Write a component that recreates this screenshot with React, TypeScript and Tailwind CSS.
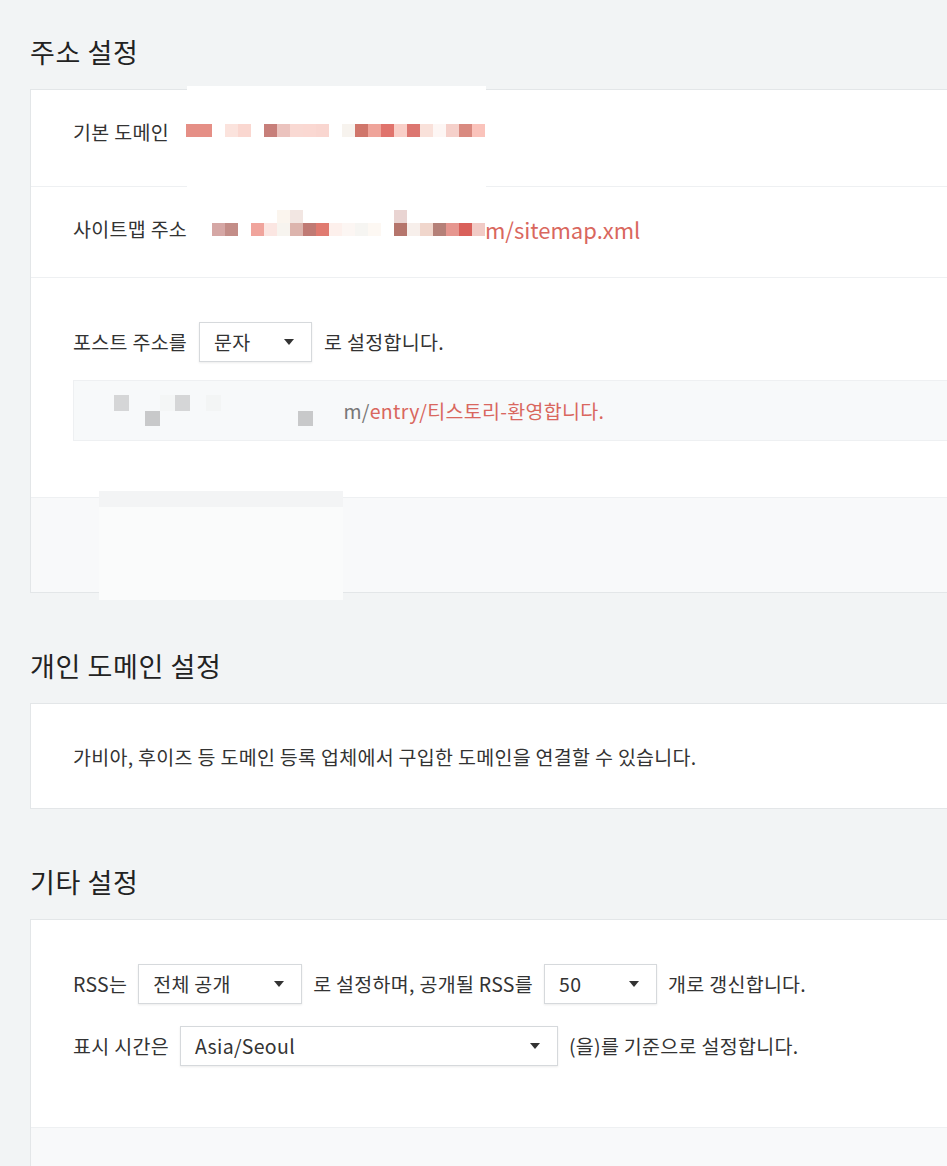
import React from 'react';

// blurred-out domain pixels, 13px cells
const domainCells: string[][] = [
  [
    '#e58f86', '#e58f86', '', '#fbe3dd', '#fad7d0', '', '#c77f7a', '#ebc3be', '#f9d9d3', '#fad8d2', '#f9d6d0', '',
    '#f7f3ee', '#d0766b', '#efa49a', '#e0736c', '#f9cfc8', '#dc7670', '#f9e1da', '#fdf6f4', '#f5d0ca', '#d98a80', '#fac3bb',
  ],
];

const sitemapCells: string[][] = [
  ['', '', '', '', '', '', '', '#fbf5ee', '#f2e6e2', '', '', '', '', '', '', '', '#e9d4d2', '', '', '', '', '', ''],
  [
    '', '', '#d5a7a5', '#c38d88', '', '#f0a49c', '#fbe6e2', '#f7f4ef', '#dcb4ad', '#c07a74', '#e07a70', '#fdf0ec',
    '#fcf6f3', '#f6f5f2', '#fdf8f3', '', '#b5756c', '#f7efeb', '#f0d6cc', '#b58078', '#e6968f', '#d9605a', '#f1cbc6',
  ],
];

const entryCells: string[][] = [
  ['#d5d6d7', '', '', '#f4f6f6', '#d5d6d7', '', '#f3f5f5', '', '', '', '', '', '', '', ''],
  ['', '', '#c8c9ca', '', '', '', '', '', '', '', '', '', '#c8c9ca', '', ''],
];

function Mosaic({ rows, size }: { rows: string[][]; size: string }) {
  return (
    <div className="flex flex-col">
      {rows.map((row, r) => (
        <div key={r} className="flex">
          {row.map((c, i) => (
            <span key={i} style={{ width: size, height: size, background: c || 'transparent' }} />
          ))}
        </div>
      ))}
    </div>
  );
}

function Caret() {
  return (
    <svg width="10" height="6" viewBox="0 0 10 6" className="shrink-0">
      <path d="M0 0h10L5 6z" fill="#333" />
    </svg>
  );
}

function Select({ value, width }: { value: string; width: string }) {
  return (
    <div
      className={`${width} shrink-0 h-[40px] pl-[14px] pr-[17px] flex items-center justify-between bg-white border border-[#d6d9dc] shadow-[0_1px_2px_rgba(0,0,0,0.08)] text-[19.5px] text-[#333]`}
    >
      <span>{value}</span>
      <Caret />
    </div>
  );
}

function Title({ children, className = '' }: { children: React.ReactNode; className?: string }) {
  return (
    <h2 className={`text-[27px] leading-[38px] tracking-[0.6px] text-[#222] mb-[18px] ${className}`}>{children}</h2>
  );
}

export default function App() {
  return (
    <div className="w-[947px] h-[1166px] overflow-hidden bg-[#f2f4f5] font-['Noto_Sans_CJK_KR','Noto_Sans',sans-serif] text-[#333] tracking-[0.3px]">
      <div className="pl-[30px] pt-[33px]">
        {/* 주소 설정 */}
        <Title>주소 설정</Title>
        <div className="relative w-[960px] bg-white border border-[#e3e6e8]">
          <div className="absolute left-[156px] top-[-4px] w-[299px] h-[190px] bg-white" />
          <div className="absolute left-[68px] top-[401px] w-[244px] h-[109px] bg-[#fafbfb]">
            <div className="h-[16px] bg-[#f3f4f5]" />
          </div>

          <div className="border-b border-[#eef0f2] pl-[42px] pt-[26px] pb-[38px]">
            <div className="relative flex items-center h-[32px] text-[19.5px]">
              <span className="w-[113px] shrink-0 whitespace-nowrap">기본 도메인</span>
              <div className="-translate-y-[2px]">
                <Mosaic rows={domainCells} size="13px" />
              </div>
            </div>
          </div>

          <div className="border-b border-[#eef0f2] pl-[42px] pt-[26px] pb-[32px]">
            <div className="relative flex items-center h-[32px] text-[19.5px]">
              <span className="w-[113px] shrink-0 whitespace-nowrap">사이트맵 주소</span>
              <div className="-translate-y-[6px]">
                <Mosaic rows={sitemapCells} size="13px" />
              </div>
              <span className="text-[#d9675e] text-[22px] tracking-normal whitespace-nowrap">m/sitemap.xml</span>
            </div>
          </div>

          <div className="pl-[42px] pt-[44px] pb-[56px]">
            <div className="flex items-center gap-[12px] text-[19.5px] whitespace-nowrap">
              <span>포스트 주소를</span>
              <Select value="문자" width="w-[113px]" />
              <span>로 설정합니다.</span>
            </div>
            <div className="relative mt-[18px] h-[61px] flex items-center pl-[40px] bg-[#f7f9fa] border border-[#eef0f2] text-[19.5px] whitespace-nowrap">
              <Mosaic rows={entryCells} size="15.3px" />
              <span className="text-[#777]">m/</span>
              <span className="text-[#d9675e]">entry/티스토리-환영합니다.</span>
            </div>
          </div>

          <div className="h-[95px] border-t border-[#eef0f2] bg-[#f8f9fa]" />
        </div>

        {/* 개인 도메인 설정 */}
        <Title className="mt-[54px]">개인 도메인 설정</Title>
        <div className="w-[960px] bg-white border border-[#e3e6e8] pl-[42px] pt-[37px] pb-[35px]">
          <p className="text-[19.5px] leading-[32px]">가비아, 후이즈 등 도메인 등록 업체에서 구입한 도메인을 연결할 수 있습니다.</p>
        </div>

        {/* 기타 설정 */}
        <Title className="mt-[54px]">기타 설정</Title>
        <div className="w-[960px] bg-white border border-[#e3e6e8]">
          <div className="pl-[42px] pt-[44px] pb-[61px] flex flex-col gap-[22px] text-[19.5px] whitespace-nowrap">
            <div className="flex items-center gap-[11px]">
              <span>RSS는</span>
              <Select value="전체 공개" width="w-[164px]" />
              <span>로 설정하며, 공개될 RSS를</span>
              <Select value="50" width="w-[113px]" />
              <span>개로 갱신합니다.</span>
            </div>
            <div className="flex items-center gap-[11px]">
              <span>표시 시간은</span>
              <Select value="Asia/Seoul" width="w-[378px]" />
              <span>(을)를 기준으로 설정합니다.</span>
            </div>
          </div>
          <div className="h-[95px] border-t border-[#eef0f2] bg-[#f8f9fa]" />
        </div>
      </div>
    </div>
  );
}
